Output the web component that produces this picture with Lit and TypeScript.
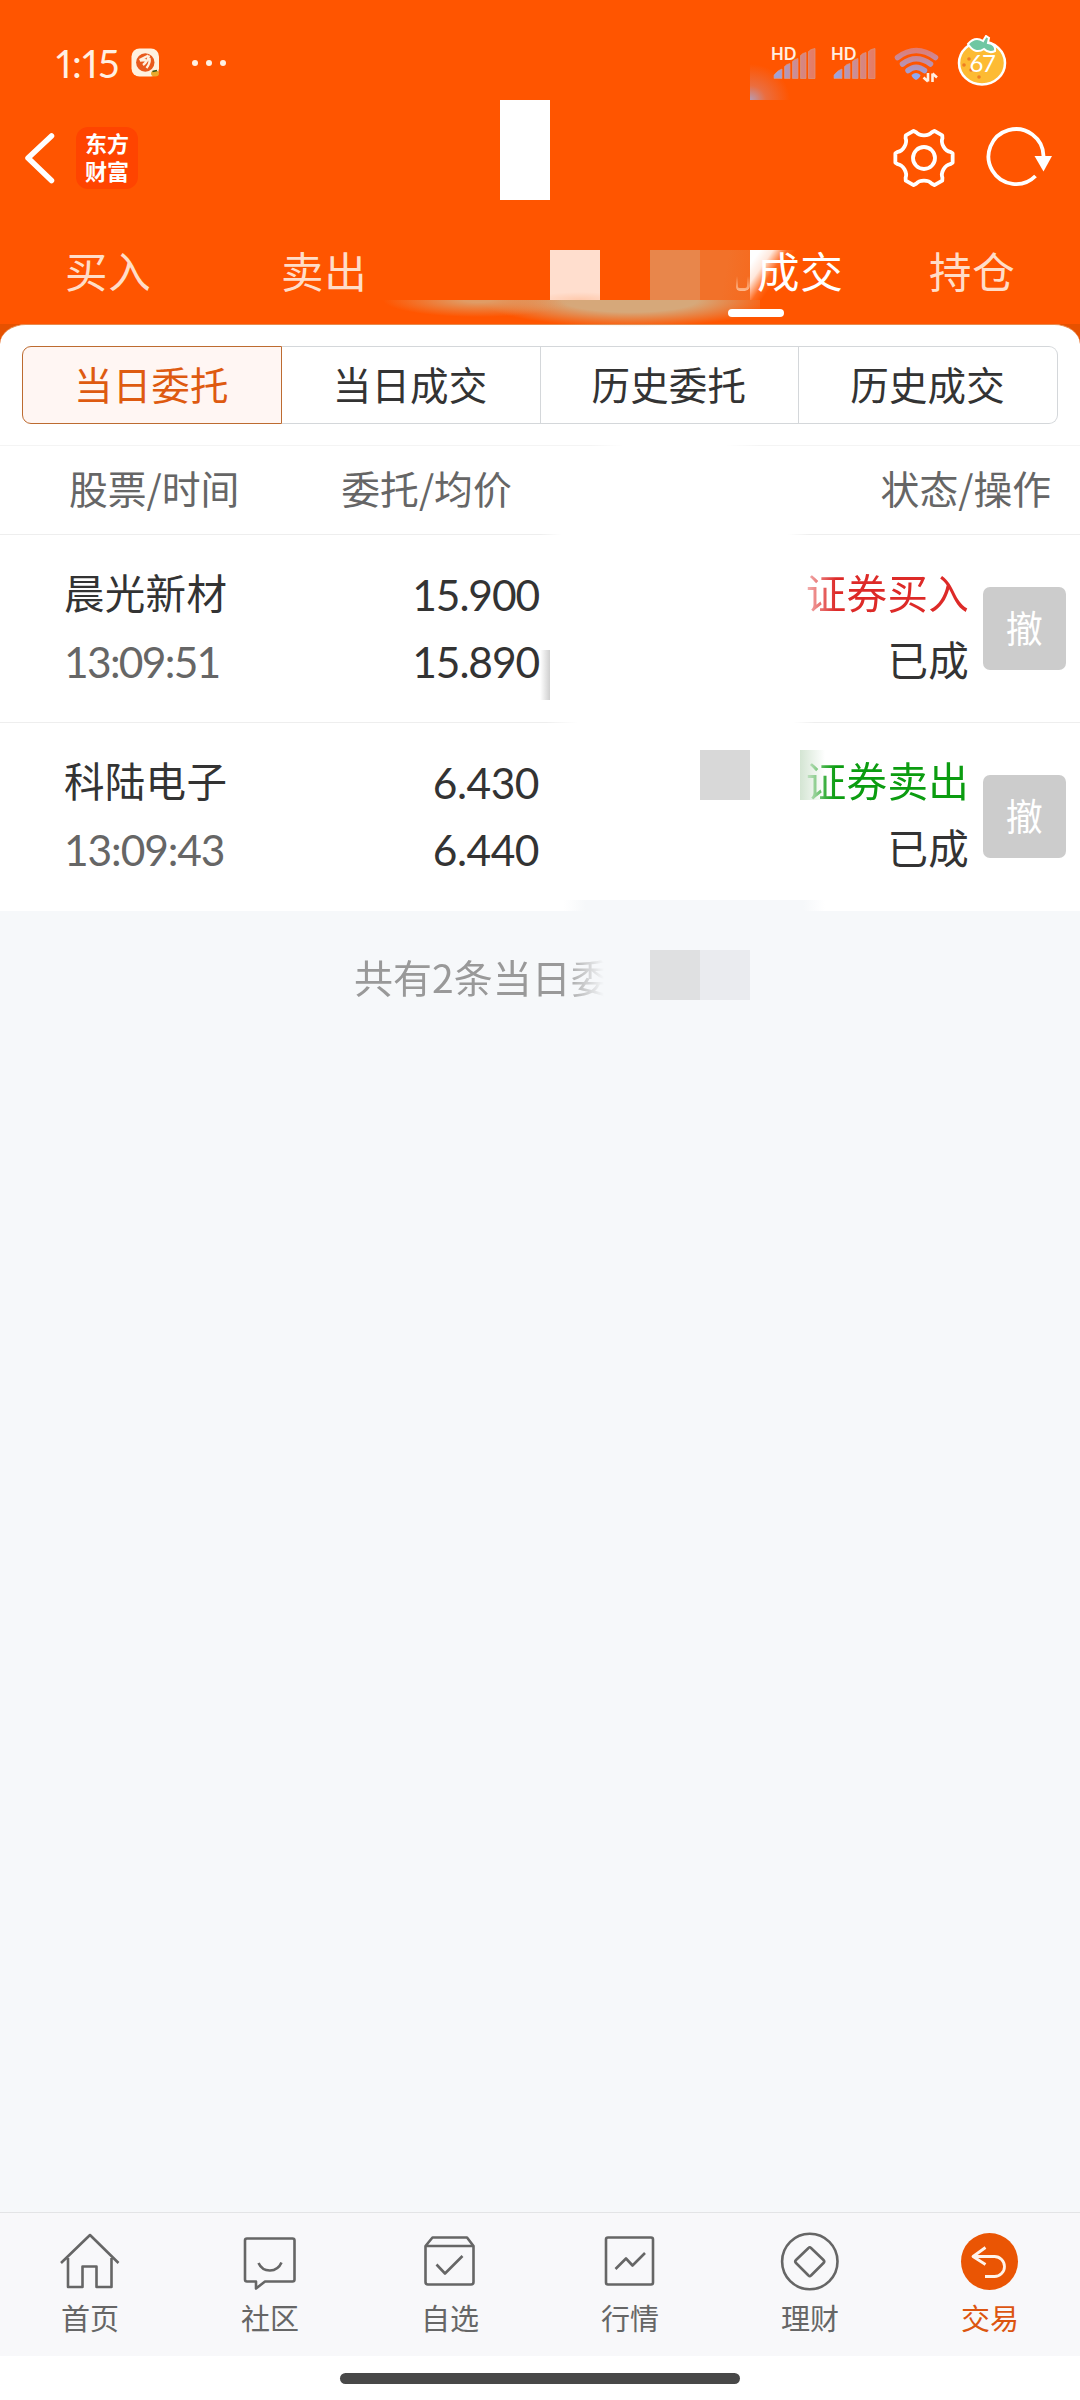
import { LitElement, html, css, svg } from "lit";
import { customElement, property } from "lit/decorators.js";
import { classMap } from "lit/directives/class-map.js";

interface Order {
  name: string;
  time: string;
  price: string;
  average: string;
  side: "buy" | "sell";
  action: string;
  state: string;
}

const ORDERS: Order[] = [
  { name: "晨光新材", time: "13:09:51", price: "15.900", average: "15.890", side: "buy", action: "证券买入", state: "已成" },
  { name: "科陆电子", time: "13:09:43", price: "6.430", average: "6.440", side: "sell", action: "证券卖出", state: "已成" },
];

const SEGMENTS = ["当日委托", "当日成交", "历史委托", "历史成交"];

const NAV = [
  { label: "首页", icon: svg`<path d="M1 32 30 4 58.500 32M8 27V56H22.500V35.500H36.500V56H51.500V27"/>` },
  { label: "社区", icon: svg`<path d="M7 7.500H52.500Q54.500 7.500 54.500 9.500V48.500Q54.500 50.500 52.500 50.500H25L16 57.500V50.500H7Q5 50.500 5 48.500V9.500Q5 7.500 7 7.500Z"/><path d="M18.500 32C23 42 37 42 41.500 31.500"/>` },
  { label: "自选", icon: svg`<path d="M5.500 15V51Q5.500 53.500 8 53.500H51Q53.500 53.500 53.500 51V15L47 6.500H12.500L5.500 15H53.500"/><path d="M16.500 33.500 25 42.500 42.500 25"/>` },
  { label: "行情", icon: svg`<rect x="6" y="6.500" width="47" height="47" rx="2"/><path d="M15.500 38 26 27.500 32.500 34.500 45 22"/>` },
  { label: "理财", icon: svg`<circle cx="29.800" cy="30.500" r="27.700"/><path d="M28.500 17Q29.800 15.500 31 17L43.500 29Q45 30.500 43.500 32L31 44.500Q29.800 46 28.500 44.500L16 32Q14.500 30.500 16 29Z"/>` },
  { label: "交易", active: true, icon: svg`<circle cx="29.500" cy="30.500" r="28.500" fill="#ea5504" stroke="none"/><path stroke="#fff3ea" stroke-width="2.800" d="M25.500 16.500 13 25.500 25.500 33.500M13 25.500H34.500A10 10 0 0 1 34.500 45.500H25"/>` },
];

/** Outline of a six-toothed gear centred on (31, 31). */
function gearPath(): string {
  const at = (deg: number, r: number) => {
    const a = (deg * Math.PI) / 180;
    return `${(31 + r * Math.cos(a)).toFixed(2)} ${(31 + r * Math.sin(a)).toFixed(2)}`;
  };
  let d = "";
  for (let k = 0; k < 6; k++) {
    const t = k * 60;
    d += `${k ? "L" : "M"}${at(t - 9, 29)}L${at(t + 9, 29)}`;
    d += `L${at(t + 13, 27)}C${at(t + 18, 22)} ${at(t + 42, 22)} ${at(t + 47, 27)}`;
  }
  return d + "Z";
}

/** Tabular ones leave wide gaps, so figures that contain them are tracked tighter. */
function tracking(figures: string): string {
  const ones = figures.split("1").length - 1;
  return `letter-spacing:${(-0.5 - 0.6 * ones).toFixed(1)}px`;
}

const signal = () => svg`
  <path d="M2 30.500V27Q6 22 10 21V30.500Z"/>
  <path d="M12.500 30.500V18.500Q15 16 18 15.500V30.500Z"/>
  <path d="M20.500 30.500V13.500Q23 11 26 10.500V30.500Z"/>
  <path d="M28.500 30.500V7.500Q31 5 34 4.500V30.500Z"/>
  <path d="M36.500 30.500V3.500Q39 1 43 0.500V30.500Z"/>`;

@customElement("status-bar")
class StatusBar extends LitElement {
  static styles = css`
    :host { display: flex; align-items: center; height: 82px; padding: 0 71px 0 56px; color: #fff0e2; }
    .clock { font: 39px/50px Lato, "Liberation Sans", sans-serif; width: 75px; letter-spacing: 0.500px; white-space: nowrap; font-feature-settings: "pnum" 1; }
    svg { display: block; flex: none; }
    .dots { margin-left: 31px; }
    .wifi { margin: 3px 16px 0 1px; }
    .spacer { flex: 1; }
    .group { position: relative; display: flex; margin-right: 16px; }
    .hd { position: absolute; left: -1px; top: -4px; font: 700 16.500px/20px Lato, sans-serif; }
    .battery { position: relative; width: 52px; height: 52px; margin-top: -4px; }
    .level { position: absolute; left: 0; top: 14px; width: 50px; text-align: center; font: 24px/28px Lato, sans-serif; letter-spacing: -1.500px; color: #fff; }
  `;
  render() {
    return html`
      <div class="clock">1:15</div>
      <svg width="29" height="30" viewBox="0 0 29 30">
        <rect x="0.500" y="0.500" width="27.500" height="28" rx="8" fill="#fff1df"/>
        <circle cx="14.300" cy="14.500" r="9.200" fill="#e85a1c"/>
        <path d="M8.500 12 17.500 7.500M9 12.500 15 12M12 17Q17 13 18 7.500M15.500 20Q19.500 15 18.500 10" stroke="#fff1df" stroke-width="2.300" fill="none"/>
        <ellipse cx="24" cy="25.500" rx="4" ry="3" fill="#e8a92d"/><path d="M21.500 23.500 26 22.500" stroke="#35551c" stroke-width="1.500"/>
      </svg>
      <svg class="dots" width="36" height="8" viewBox="0 0 36 8" fill="#fff0e2">
        <circle cx="4" cy="4" r="3"/><circle cx="18" cy="4" r="3"/><circle cx="32" cy="4" r="3"/>
      </svg>
      <div class="spacer"></div>
      ${[0, 1].map(
        () => html`<div class="group">
          <svg width="44" height="31" viewBox="0 0 44 31">
            <defs><linearGradient id="g" gradientUnits="userSpaceOnUse" x1="0" y1="0" x2="44" y2="0"><stop offset="0" stop-color="#8fa9f2"/><stop offset="0.500" stop-color="#c98e98"/><stop offset="1" stop-color="#e97a5e"/></linearGradient></defs>
            <g fill="url(#g)" stroke="#d89a86" stroke-width="0.700">${signal()}</g>
          </svg>
          <span class="hd">HD</span>
        </div>`
      )}
      <svg class="wifi" width="48" height="36" viewBox="0 0 48 36">
        <defs><linearGradient id="w" gradientUnits="userSpaceOnUse" x1="0" y1="0" x2="0" y2="33"><stop offset="0" stop-color="#e6796a"/><stop offset="1" stop-color="#90a8f0"/></linearGradient></defs>
        <g fill="none" stroke="url(#w)" stroke-width="5.500" stroke-linecap="round">
          <path d="M4.500 10.500Q23 -3.500 42.500 10.500"/><path d="M9.500 17Q23 6.500 37.500 17"/><path d="M15 23.500Q23 17 31.500 23.500"/>
        </g>
        <path d="M18.500 28Q23 24 27.500 28Q27 31 23 33Q19 31 18.500 28Z" fill="#90a8f0"/>
        <path d="M35 26V34.500M35 34.500 30.500 30.500M39.500 35V26.500M39.500 26.500 44 30.500" stroke="#fff0e2" stroke-width="2.600" fill="none"/>
      </svg>
      <div class="battery">
        <svg width="52" height="52" viewBox="0 0 52 52">
          <ellipse cx="25" cy="28" rx="23" ry="21.500" fill="#fdbb33" stroke="#fff" stroke-width="2.500"/>
          <path d="M11 9Q18 1 26 6L29 1 32 3 31 8Q39 9 38 16Q32 19 27 14Q18 20 11 9Z" fill="#6fc7a2" stroke="#fff" stroke-width="2"/>
          <g fill="#ef7d22"><circle cx="12" cy="24" r="1.800"/><circle cx="7" cy="30" r="1.800"/><circle cx="14" cy="35" r="1.800"/><circle cx="22" cy="42" r="1.800"/></g>
        </svg>
        <span class="level">67</span>
      </div>
    `;
  }
}

@customElement("order-row")
class OrderRow extends LitElement {
  @property({ attribute: false }) order!: Order;
  static styles = css`
    :host { display: flex; box-sizing: border-box; height: 188px; padding: 30px 14px 0 64px; border-bottom: 1.500px solid #eeeeee; color: #333; font: 40.500px/54px "Noto Sans CJK SC", sans-serif; letter-spacing: 0.300px; }
    :host(:last-child) { border-bottom-color: transparent; }
    .cell { display: flex; flex-direction: column; gap: 13px; white-space: nowrap; }
    .line { height: 54px; }
    .who { width: 220px; }
    .num { font-family: Lato, "Liberation Sans", sans-serif; font-size: 42.500px; line-height: 59px; font-feature-settings: "tnum" 1; }
    .time { color: #666; }
    .price { width: 255px; align-items: flex-end; }
    .result { width: 430px; align-items: flex-end; }
    .buy { color: #dd2a28; -webkit-mask-image: linear-gradient(90deg, rgba(0, 0, 0, 0.350), #000 30px); }
    .sell { color: #0b9c10; -webkit-mask-image: linear-gradient(90deg, rgba(0, 0, 0, 0.450), #000 30px); }
    .cancel { display: flex; align-items: center; justify-content: center; width: 83px; height: 83px; margin: 22px 0 0 14px; border-radius: 7px; background: #ccc; color: #fff; font-size: 37px; box-sizing: border-box; padding-bottom: 4px; }
  `;
  render() {
    const o = this.order;
    return html`
      <div class="cell who"><div class="line">${o.name}</div><div class="line num time" style=${tracking(o.time)}>${o.time}</div></div>
      <div class="cell price"><div class="line num" style=${tracking(o.price)}>${o.price}</div><div class="line num" style=${tracking(o.average)}>${o.average}</div></div>
      <div class="cell result"><div class="line ${o.side}">${o.action}</div><div class="line">${o.state}</div></div>
      <div class="cancel">撤</div>
    `;
  }
}

@customElement("app-root")
class AppRoot extends LitElement {
  static styles = css`
    :host { display: block; }
    .page { position: relative; display: flex; flex-direction: column; width: 1080px; height: 2400px; overflow: hidden; background: #f6f8fa; font-family: "Noto Sans CJK SC", sans-serif; color: #333; }
    .header { height: 324px; background: #ff5500; display: flex; flex-direction: column; flex: none; }
    status-bar { margin-top: 22px; box-sizing: border-box; }
    .titlebar { display: flex; align-items: center; height: 108px; padding: 0 25px 0 24px; }
    .titlebar svg { display: block; flex: none; }
    .brand { width: 62px; height: 62px; margin-left: 20px; border-radius: 12px; background: #ff4400; color: #fff; font-family: Lato, "Noto Sans CJK SC", sans-serif; font-weight: 700; font-size: 22px; text-align: center; box-sizing: border-box; padding-top: 3px; }
    .brand div { height: 27.500px; line-height: 27.500px; }
    .spacer { flex: 1; }
    .tools { display: flex; gap: 31px; }
    .tabs { display: flex; padding: 0 65px 0 65px; height: 112px; box-sizing: border-box; padding-top: 26px; font-size: 42.500px; line-height: 64px; letter-spacing: 0.700px; color: #ffddc8; white-space: nowrap; }
    .tabs span { width: 86px; flex: none; }
    .tab-sell { margin-left: 130px; }
    .tab-deal { margin-left: 390px; color: #fff; }
    .tab-hold { margin-left: 86px; }
    .corner { background: linear-gradient(#e65100 0 22px, #fff 22px); flex: none; }
    .sheet { background: #fff; border-radius: 26px 26px 0 0 / 20px 20px 0 0; border-top: 1px solid #e88b4e; padding-top: 21px; }
    .segments { display: flex; margin: 0 22px; height: 78px; box-sizing: border-box; }
    .segment { flex: 1; box-sizing: border-box; border: 1.500px solid #d4d7da; border-left-width: 0; display: flex; align-items: center; justify-content: center; font-size: 38.500px; line-height: 50px; letter-spacing: 0.200px; padding: 0 1px 5px 0; }
    .segment:last-child { border-radius: 0 9px 9px 0; }
    .segment.active { border: 1.500px solid #bd6b30; border-radius: 9px 0 0 9px; background: #fff6f3; color: #de5a10; }
    .columns { display: flex; justify-content: space-between; margin-top: 21px; height: 90px; padding: 0 29px 0 69px; border-top: 1.500px solid #f4f4f4; border-bottom: 1.500px solid #eeeeee; box-sizing: border-box; font-size: 38.800px; line-height: 82px; color: #666; }
    .columns .second { margin-left: -267px; }
    .total { flex: 1; padding: 37px 0 0 354px; font-size: 39px; line-height: 56px; color: #999; }
    .total span { -webkit-mask-image: linear-gradient(90deg, #000 0 208px, transparent 250px); }
    .nav { display: flex; height: 144px; box-sizing: border-box; border-top: 1.500px solid #e3e4e6; background: #f8f8fa; color: #666; }
    .item { width: 180px; display: flex; flex-direction: column; align-items: center; padding-top: 18px; box-sizing: border-box; font-size: 29px; line-height: 42px; }
    .item svg { display: block; margin-bottom: 5px; }
    .item.active { color: #dc5510; }
    .gesture { height: 44px; box-sizing: border-box; padding-top: 17px; background: #fff; display: flex; justify-content: center; }
    .gesture i { width: 400px; height: 11px; border-radius: 6px; background: #484848; }

    .patch { position: absolute; width: 50px; height: 50px; }
    .p-title { left: 500px; top: 100px; height: 100px; background: #fff; }
    .p-status { left: 750px; top: 50px; background: radial-gradient(ellipse 40px 36px at 0 100%, #b59cb4, rgba(226, 120, 90, 0.700) 40%, transparent); }
    .p-tab1 { left: 550px; top: 250px; background: radial-gradient(ellipse 45px 8px at 60% 100%, #ffc9ac, #ffdece); }
    .p-tab2 { left: 650px; top: 250px; background: #e8864b; }
    .p-tab3 { left: 700px; top: 250px; background: linear-gradient(100deg, #f27129 50%, #f66a1e); }
    .p-tab4 { left: 750px; top: 250px; background: linear-gradient(125deg, #fff 12%, #ffe8dc 27%, rgba(255, 140, 80, 0.400) 44%, transparent 55%); }
    .p-tail { left: 736px; top: 276px; width: 14px; height: 15px; border: solid rgba(255, 205, 170, 0.800); border-width: 0 3px 3px 2px; border-radius: 0 0 5px 4px; box-sizing: border-box; -webkit-mask-image: linear-gradient(transparent, #000); }
    .p-smear { left: 380px; top: 300px; width: 380px; height: 50px; background: radial-gradient(ellipse 95px 17px at 98px 0, #df9c66 15%, rgba(223, 156, 102, 0)), radial-gradient(ellipse 150px 27px at 250px 0, #d6a87a 45%, rgba(214, 168, 122, 0) 100%); }
    .p-veil1 { left: 590px; top: 444px; width: 170px; height: 4px; background: linear-gradient(90deg, transparent, #fff 20% 80%, transparent); }
    .p-veil2 { left: 540px; top: 532px; width: 270px; height: 4px; background: linear-gradient(90deg, transparent, #fff 8% 92%, transparent); }
    .p-veil3 { left: 545px; top: 720px; width: 270px; height: 4px; background: linear-gradient(90deg, transparent, #fff 12% 92%, transparent); }
    .p-edge { left: 540px; top: 650px; width: 10px; background: linear-gradient(90deg, rgba(255, 255, 255, 0), #cfcfcf); }
    .p-gray { left: 700px; top: 750px; background: #d8d8d8; }
    .p-green { left: 800px; top: 750px; width: 25px; background: linear-gradient(90deg, #d4e5d3, rgba(255, 255, 255, 0)); }
    .p-base { left: 550px; top: 900px; width: 275px; height: 11px; background: linear-gradient(90deg, transparent 5%, #f6f8fa 13% 92%, transparent); }
    .p-foot1 { left: 650px; top: 950px; background: #dfe0e1; }
    .p-foot2 { left: 700px; top: 950px; background: #eaebef; }
    .marker { position: absolute; left: 728px; top: 309px; width: 56px; height: 8px; border-radius: 4px; background: #fff; }
    .deal { position: relative; z-index: 1; }
  `;

  render() {
    const patches = ["p-title", "p-status", "p-tab1", "p-tab2", "p-tab3", "p-tab4", "p-tail", "p-smear", "p-veil1", "p-veil2", "p-veil3", "p-edge", "p-gray", "p-green", "p-base", "p-foot1", "p-foot2"];
    return html`
      <div class="page">
        <div class="header">
          <status-bar></status-bar>
          <div class="titlebar">
            <svg width="32" height="52" viewBox="0 0 32 52" fill="none" stroke="#fff" stroke-width="5.500" stroke-linecap="round" stroke-linejoin="round"><path d="M27.500 4 4 26 27.500 48.500"/></svg>
            <div class="brand"><div>东方</div><div>财富</div></div>
            <div class="spacer"></div>
            <div class="tools">
              <svg width="62" height="62" viewBox="0 0 62 62" fill="none" stroke="#fff" stroke-width="3.800" stroke-linejoin="round"><path d=${gearPath()}/><circle cx="31" cy="31" r="11"/></svg>
              <svg width="69" height="62" viewBox="0 0 69 62"><path d="M49.500 49A27.500 27.500 0 1 1 57.500 29" fill="none" stroke="#fff" stroke-width="3.800"/><path d="M48.500 29H66L57.500 44.500Z" fill="#fff"/></svg>
            </div>
          </div>
          <div class="tabs">
            <span>买入</span><span class="tab-sell">卖出</span><span class="tab-deal deal">成交</span><span class="tab-hold">持仓</span>
          </div>
        </div>
        <div class="corner">
          <div class="sheet">
            <div class="segments">
              ${SEGMENTS.map((s, i) => html`<div class=${classMap({ segment: true, active: i === 0 })}>${s}</div>`)}
            </div>
            <div class="columns"><span>股票/时间</span><span class="second">委托/均价</span><span>状态/操作</span></div>
            <div>${ORDERS.map((o) => html`<order-row .order=${o}></order-row>`)}</div>
          </div>
        </div>
        <div class="total"><span>共有2条当日委</span></div>
        <div class="nav">
          ${NAV.map(
            (n) => html`<div class=${classMap({ item: true, active: !!n.active })}>
              <svg width="60" height="60" viewBox="0 0 60 60" fill="none" stroke="#666" stroke-width="2.600" stroke-linejoin="round">${n.icon}</svg>
              ${n.label}
            </div>`
          )}
        </div>
        <div class="gesture"><i></i></div>
        ${patches.map((p) => html`<div class="patch ${p}"></div>`)}
        <div class="marker"></div>
      </div>
    `;
  }
}
